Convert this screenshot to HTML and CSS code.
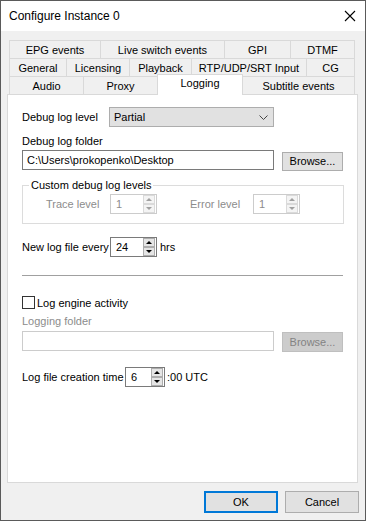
FILE: index.html
```html
<!DOCTYPE html>
<html>
<head>
<meta charset="utf-8">
<link rel="stylesheet" href="styles.css">
</head>
<body>
<div class="window">
  <div class="titlebar">
    <span class="title">Configure Instance 0</span>
    <svg class="close" width="12" height="12" viewBox="0 0 12 12"><path d="M1 1 L11 11 M11 1 L1 11" stroke="#000" stroke-width="1.1" fill="none"/></svg>
  </div>
  <div class="tabs">
    <div class="tabrow">
      <div class="tab w92">EPG events</div>
      <div class="tab w125">Live switch events</div>
      <div class="tab w67">GPI</div>
      <div class="tab w65">DTMF</div>
    </div>
    <div class="tabrow">
      <div class="tab w58">General</div>
      <div class="tab w64">Licensing</div>
      <div class="tab w63">Playback</div>
      <div class="tab w116">RTP/UDP/SRT Input</div>
      <div class="tab w49">CG</div>
    </div>
    <div class="tabrow">
      <div class="tab w75">Audio</div>
      <div class="tab w75">Proxy</div>
      <div class="tab w86 selected">Logging</div>
      <div class="tab w113">Subtitle events</div>
    </div>
  </div>
  <div class="panel">
    <div class="row r-level">
      <span class="lbl lw87">Debug log level</span>
      <div class="select"><span>Partial</span><svg width="9" height="5" viewBox="0 0 9 5"><path d="M0.5 0.5 L4.5 4.5 L8.5 0.5" stroke="#444" fill="none"/></svg></div>
    </div>
    <div class="caption c-folder">Debug log folder</div>
    <div class="row r-path">
      <div class="textbox">C:\Users\prokopenko\Desktop</div>
      <div class="btn browse">Browse...</div>
    </div>
    <fieldset class="group">
      <legend>Custom debug log levels</legend>
      <div class="row">
        <span class="lbl dis lw64">Trace level</span>
        <div class="spin disabled sw47"><span class="val">1</span><div class="arrows"><div class="arr up"></div><div class="arr down"></div></div></div>
        <span class="lbl dis lw63 ml33">Error level</span>
        <div class="spin disabled sw47"><span class="val">1</span><div class="arrows"><div class="arr up"></div><div class="arr down"></div></div></div>
      </div>
    </fieldset>
    <div class="row r-every">
      <span class="lbl lw88">New log file every</span>
      <div class="spin sw47"><span class="val">24</span><div class="arrows"><div class="arr up"></div><div class="arr down"></div></div></div>
      <span class="unit">hrs</span>
    </div>
    <div class="separator"></div>
    <div class="row r-check">
      <span class="checkbox"></span>
      <span class="checklbl">Log engine activity</span>
    </div>
    <div class="caption dis c-logfolder">Logging folder</div>
    <div class="row r-path2">
      <div class="textbox disabled"></div>
      <div class="btn browse disabled">Browse...</div>
    </div>
    <div class="row r-time">
      <span class="lbl lw103">Log file creation time</span>
      <div class="spin sw40"><span class="val">6</span><div class="arrows"><div class="arr up"></div><div class="arr down"></div></div></div>
      <span class="unit2">:00 UTC</span>
    </div>
  </div>
  <div class="footer">
    <div class="btn default">OK</div>
    <div class="btn cancel">Cancel</div>
  </div>
</div>
</body>
</html>
```
FILE: styles.css
```css
html, body {
  margin: 0;
  padding: 0;
}
body {
  font-family: "Liberation Sans", Arial, sans-serif;
  font-size: 11px;
  color: #000;
  background: #f0f0f0;
}
.window {
  width: 366px;
  height: 521px;
  box-sizing: border-box;
  border: 1px solid #5a5a5a;
  background: #f0f0f0;
  overflow: hidden;
}
.titlebar {
  height: 30px;
  background: #fff;
  display: flex;
  align-items: center;
  justify-content: space-between;
  padding: 0 9px 0 8px;
}
.title {
  font-size: 12px;
  line-height: 16px;
}
.close {
  display: block;
}
.tabs {
  margin-top: 9px;
  padding-left: 8px;
}
.tabrow {
  display: flex;
  align-items: flex-end;
  height: 18px;
}
.tab {
  box-sizing: border-box;
  height: 18px;
  border: 1px solid #d9d9d9;
  border-bottom: none;
  margin-left: -1px;
  background: #f0f0f0;
  text-align: center;
  line-height: 18px;
  white-space: nowrap;
}
.tab:first-child {
  margin-left: 0;
}
.tab.selected {
  position: relative;
  z-index: 2;
  height: 21px;
  margin-top: -2px;
  margin-bottom: -1px;
  background: #fff;
  line-height: 16px;
  padding-bottom: 4px;
}
.w92 { width: 92px; }
.w125 { width: 125px; }
.w67 { width: 67px; }
.w65 { width: 65px; }
.w58 { width: 58px; }
.w64 { width: 64px; }
.w63 { width: 63px; }
.w116 { width: 116px; }
.w49 { width: 49px; }
.w75 { width: 75px; }
.w86 { width: 86px; }
.w113 { width: 113px; }

.panel {
  position: relative;
  z-index: 1;
  margin-left: 6px;
  width: 351px;
  height: 389px;
  box-sizing: border-box;
  border: 1px solid #d9d9d9;
  background: #fff;
  padding-left: 14px;
}
.row {
  display: flex;
  align-items: center;
}
.lbl {
  flex: none;
  white-space: nowrap;
}
.lw87 { width: 87px; }
.lw88 { width: 88px; }
.lw64 { width: 64px; }
.lw63 { width: 63px; }
.lw103 { width: 103px; }
.ml33 { margin-left: 33px; }
.dis { color: #8c8c8c; }

.r-level {
  margin-top: 12px;
  height: 20px;
}
.select {
  box-sizing: border-box;
  width: 165px;
  height: 20px;
  border: 1px solid #adadad;
  background: #e1e1e1;
  display: flex;
  align-items: center;
  justify-content: space-between;
  padding: 0 5px 0 4px;
}
.caption {
  line-height: 16px;
  height: 16px;
}
.c-folder {
  margin-top: 6px;
}
.r-path {
  margin-top: 1px;
  align-items: flex-start;
}
.textbox {
  box-sizing: border-box;
  width: 252px;
  height: 20px;
  border: 1px solid #7a7a7a;
  background: #fff;
  padding-left: 4px;
  line-height: 18px;
  white-space: nowrap;
}
.textbox.disabled {
  border-color: #cccccc;
}
.btn {
  box-sizing: border-box;
  border: 1px solid #adadad;
  background: #e1e1e1;
  text-align: center;
  white-space: nowrap;
}
.browse {
  width: 61px;
  height: 19px;
  margin-left: 8px;
  margin-top: 2px;
  line-height: 17px;
}
.browse.disabled {
  background: #cccccc;
  border-color: #bfbfbf;
  color: #838383;
  margin-top: 1px;
  height: 20px;
  line-height: 18px;
}
.group {
  box-sizing: border-box;
  width: 322px;
  margin: 6px 0 0 0;
  padding: 0 0 9px 23px;
  border: 1px solid #dcdcdc;
  min-width: 0;
}
.group legend {
  margin-left: -17px;
  padding: 0 2px;
  line-height: 16px;
}
.group .row {
  margin-top: 1px;
}
.spin {
  box-sizing: border-box;
  height: 20px;
  border: 1px solid #7a7a7a;
  background: #fff;
  display: flex;
  align-items: center;
  justify-content: space-between;
  padding: 0 1px 0 5px;
  flex: none;
}
.spin.disabled {
  border-color: #cccccc;
  color: #8c8c8c;
}
.sw47 { width: 47px; }
.sw40 { width: 40px; }
.val {
  line-height: 16px;
}
.arrows {
  display: flex;
  flex-direction: column;
  width: 12px;
}
.arr {
  box-sizing: border-box;
  height: 9px;
  border: 1px solid #adadad;
  background: #e5e5e5;
  display: flex;
  align-items: center;
  justify-content: center;
}
.arr.up::after {
  content: "";
  border-left: 3px solid transparent;
  border-right: 3px solid transparent;
  border-bottom: 3px solid #000;
}
.arr.down::after {
  content: "";
  border-left: 3px solid transparent;
  border-right: 3px solid transparent;
  border-top: 3px solid #000;
}
.spin.disabled .arr {
  border-color: #dadada;
  background: #f4f4f4;
}
.spin.disabled .arr.up::after {
  border-bottom-color: #a0a0a0;
}
.spin.disabled .arr.down::after {
  border-top-color: #a0a0a0;
}
.r-every {
  margin-top: 13px;
  height: 20px;
}
.unit {
  margin-left: 3px;
}
.separator {
  margin-top: 18px;
  width: 321px;
  height: 1px;
  background: #a0a0a0;
}
.r-check {
  margin-top: 20px;
  height: 13px;
}
.checkbox {
  box-sizing: border-box;
  width: 13px;
  height: 13px;
  border: 1px solid #333;
  background: #fff;
  flex: none;
}
.checklbl {
  margin-left: 2px;
  line-height: 16px;
}
.c-logfolder {
  margin-top: 4px;
}
.r-path2 {
  margin-top: 2px;
  align-items: flex-start;
}
.r-time {
  margin-top: 15px;
  height: 20px;
}
.unit2 {
  margin-left: 2px;
}
.footer {
  display: flex;
  justify-content: flex-end;
  gap: 7px;
  margin-top: 8px;
  padding-right: 6px;
}
.footer .btn {
  width: 74px;
  height: 22px;
  line-height: 20px;
}
.btn.default {
  border: 2px solid #0078d7;
  line-height: 18px;
}
```
